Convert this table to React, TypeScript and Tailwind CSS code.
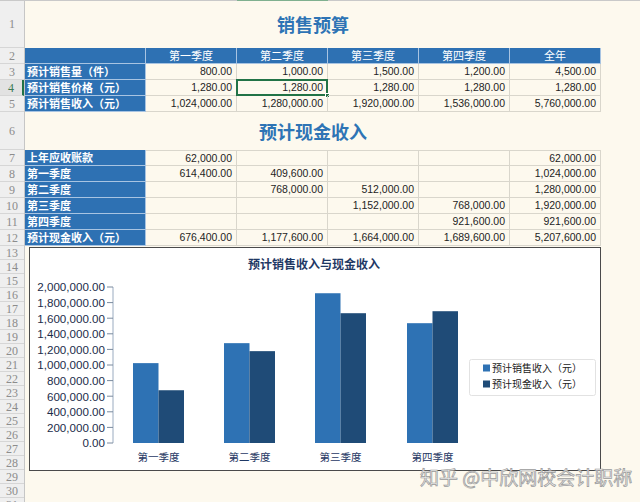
import React from "react";

const CJK = "font-['Noto_Sans_CJK_SC','Noto_Sans',sans-serif]";
const NUM = "font-['Liberation_Sans','Arial',sans-serif]";

type RowH = { n: number; h: number };
const rowHeights: RowH[] = [
  { n: 1, h: 47 },
  { n: 2, h: 16 },
  { n: 3, h: 16 },
  { n: 4, h: 16 },
  { n: 5, h: 16 },
  { n: 6, h: 38 },
  { n: 7, h: 16 },
  { n: 8, h: 16 },
  { n: 9, h: 16 },
  { n: 10, h: 16 },
  { n: 11, h: 16 },
  { n: 12, h: 16 },
  ...Array.from({ length: 19 }, (_, i) => ({ n: 13 + i, h: 14 })),
];

const t1Header = ["第一季度", "第二季度", "第三季度", "第四季度", "全年"];
const t1Rows: [string, string[]][] = [
  ["预计销售量（件）", ["800.00", "1,000.00", "1,500.00", "1,200.00", "4,500.00"]],
  ["预计销售价格（元）", ["1,280.00", "1,280.00", "1,280.00", "1,280.00", "1,280.00"]],
  ["预计销售收入（元）", ["1,024,000.00", "1,280,000.00", "1,920,000.00", "1,536,000.00", "5,760,000.00"]],
];
const t2Rows: [string, string[]][] = [
  ["上年应收账款", ["62,000.00", "", "", "", "62,000.00"]],
  ["第一季度", ["614,400.00", "409,600.00", "", "", "1,024,000.00"]],
  ["第二季度", ["", "768,000.00", "512,000.00", "", "1,280,000.00"]],
  ["第三季度", ["", "", "1,152,000.00", "768,000.00", "1,920,000.00"]],
  ["第四季度", ["", "", "", "921,600.00", "921,600.00"]],
  ["预计现金收入（元）", ["676,400.00", "1,177,600.00", "1,664,000.00", "1,689,600.00", "5,207,600.00"]],
];

function LabelCell({ text }: { text: string }) {
  return (
    <div
      className={`w-[121px] h-[16px] shrink-0 bg-[#2e71b3] border-r border-b border-[#a8c4e2] pl-[2px] text-white font-bold text-[11px] leading-[15px] whitespace-nowrap overflow-hidden ${CJK}`}
    >
      {text}
    </div>
  );
}

function NumCell({ text, selected }: { text: string; selected?: boolean }) {
  return (
    <div
      className={`relative w-[91px] h-[16px] shrink-0 border-r border-b border-[#d9d6cc] pr-[4px] text-right text-[10.5px] leading-[15px] text-[#1e1e1e] ${NUM}`}
    >
      {text}
      {selected && (
        <>
          <div className="absolute left-[-1px] top-[-1px] right-[-1px] bottom-[-1px] border-2 border-[#217346]" />
          <div className="absolute right-[-3px] bottom-[-3px] w-[5px] h-[5px] bg-[#217346] border border-white" />
        </>
      )}
    </div>
  );
}

function Chart() {
  const sales = [1024000, 1280000, 1920000, 1536000];
  const cash = [676400, 1177600, 1664000, 1689600];
  const cats = ["第一季度", "第二季度", "第三季度", "第四季度"];
  const base = 195;
  const k = 78 / 1000000;
  const gx = [103, 194, 285, 377];
  const bw = 25.5;
  const ticks = Array.from({ length: 11 }, (_, i) => i * 200000);
  const fmt = (v: number) => v.toLocaleString("en-US") + ".00";
  return (
    <svg width="570" height="222" viewBox="0 0 570 222" className="block">
      <text
        x="284"
        y="21"
        textAnchor="middle"
        fontFamily="Noto Sans CJK SC, sans-serif"
        fontWeight="700"
        fontSize="12"
        fill="#1f3864"
      >
        预计销售收入与现金收入
      </text>
      <line x1="83" y1="39" x2="83" y2={base} stroke="#9aabc0" strokeWidth="1" />
      {ticks.map((v) => {
        const y = base - v * k;
        return (
          <g key={v}>
            <line x1="77" y1={y} x2="83" y2={y} stroke="#7a8a9e" strokeWidth="1" />
            <text
              x="75"
              y={y + 4.3}
              textAnchor="end"
              fontFamily="Liberation Sans, Arial, sans-serif"
              fontSize="11.6"
              fill="#1b2c4a"
            >
              {fmt(v)}
            </text>
          </g>
        );
      })}
      {gx.map((x, i) => (
        <g key={i}>
          <rect x={x} y={base - sales[i] * k} width={bw} height={sales[i] * k} fill="#2e72b4" />
          <rect x={x + bw} y={base - cash[i] * k} width={bw} height={cash[i] * k} fill="#1f4b77" />
          <text
            x={x + bw}
            y="213"
            textAnchor="middle"
            fontFamily="Noto Sans CJK SC, sans-serif"
            fontSize="10.5"
            fill="#1f3864"
          >
            {cats[i]}
          </text>
        </g>
      ))}
      <rect x="439.5" y="111.5" width="126" height="36" rx="2" fill="#ffffff" stroke="#e2e2e2" />
      <rect x="453" y="116.5" width="7" height="7" fill="#2e72b4" />
      <text x="462" y="124" fontFamily="Noto Sans CJK SC, sans-serif" fontSize="10" fill="#222">
        预计销售收入（元）
      </text>
      <rect x="453" y="132.5" width="7" height="7" fill="#1f4b77" />
      <text x="462" y="140" fontFamily="Noto Sans CJK SC, sans-serif" fontSize="10" fill="#222">
        预计现金收入（元）
      </text>
    </svg>
  );
}

export default function App() {
  return (
    <div className="relative w-[640px] h-[502px] overflow-hidden bg-[#fdf9ee] flex flex-col">
      <div className="h-px shrink-0 flex bg-[#c9c9c9]">
        <div className="ml-[237px] w-[91px] bg-[#7fb08f]" />
      </div>
      <div className="flex flex-1 min-h-0">
        {/* row headers */}
        <div className="w-[25px] shrink-0 bg-[#efefef] border-r border-[#c6c6c6] flex flex-col">
          {rowHeights.map((r) => (
            <div
              key={r.n}
              style={{ height: r.h }}
              className={`shrink-0 border-b border-[#d6d6d6] flex items-center justify-center text-[12px] leading-none font-['Liberation_Serif',serif] ${
                r.n === 4 ? "bg-[#e2e2e2] text-[#3d7a52] border-r-2 border-r-[#217346]" : "text-[#8c8c8c]"
              }`}
            >
              {r.n}
            </div>
          ))}
        </div>

        {/* sheet content */}
        <div className="flex flex-col w-[615px]">
          <div className="h-[47px] w-[576px] flex items-center justify-center">
            <span className={`text-[18px] font-bold text-[#2e74b5] ${CJK}`}>销售预算</span>
          </div>

          <div className="flex flex-col w-[576px]">
            <div className="flex">
              <div className="w-[121px] h-[16px] bg-[#2e71b3] border-r border-b border-[#a8c4e2]" />
              {t1Header.map((h) => (
                <div
                  key={h}
                  className={`w-[91px] h-[16px] bg-[#2e71b3] border-r border-b border-[#a8c4e2] text-center text-white text-[11px] leading-[15px] ${CJK}`}
                >
                  {h}
                </div>
              ))}
            </div>
            {t1Rows.map(([label, vals], ri) => (
              <div key={label} className="flex">
                <LabelCell text={label} />
                {vals.map((v, ci) => (
                  <NumCell key={ci} text={v} selected={ri === 1 && ci === 1} />
                ))}
              </div>
            ))}
          </div>

          <div className="h-[38px] w-[576px] flex items-center justify-center">
            <span className={`text-[18px] font-bold text-[#2e74b5] ${CJK}`}>预计现金收入</span>
          </div>

          <div className="flex flex-col w-[576px]">
            {t2Rows.map(([label, vals], ri) => (
              <div key={label} className="flex">
                <LabelCell text={label} />
                {vals.map((v, ci) => (
                  <div
                    key={ci}
                    className={`w-[91px] h-[16px] shrink-0 border-r border-b ${
                      ri === 0 ? "border-t h-[16px]" : ""
                    } border-[#d9d6cc] pr-[4px] text-right text-[10.5px] leading-[15px] text-[#1e1e1e] ${NUM}`}
                  >
                    {v}
                  </div>
                ))}
              </div>
            ))}
          </div>

          <div className="mt-[1px] ml-[4px] w-[572px] h-[224px] bg-white border border-[#4a4a4a] shrink-0">
            <Chart />
          </div>
        </div>
      </div>

      <div
        className={`absolute left-[420px] top-[467px] text-[19px] leading-none whitespace-nowrap text-[#ededed] [-webkit-text-stroke:0.7px_#9a9a9a] ${CJK}`}
      >
        知乎 @中欣网校会计职称
      </div>
    </div>
  );
}
